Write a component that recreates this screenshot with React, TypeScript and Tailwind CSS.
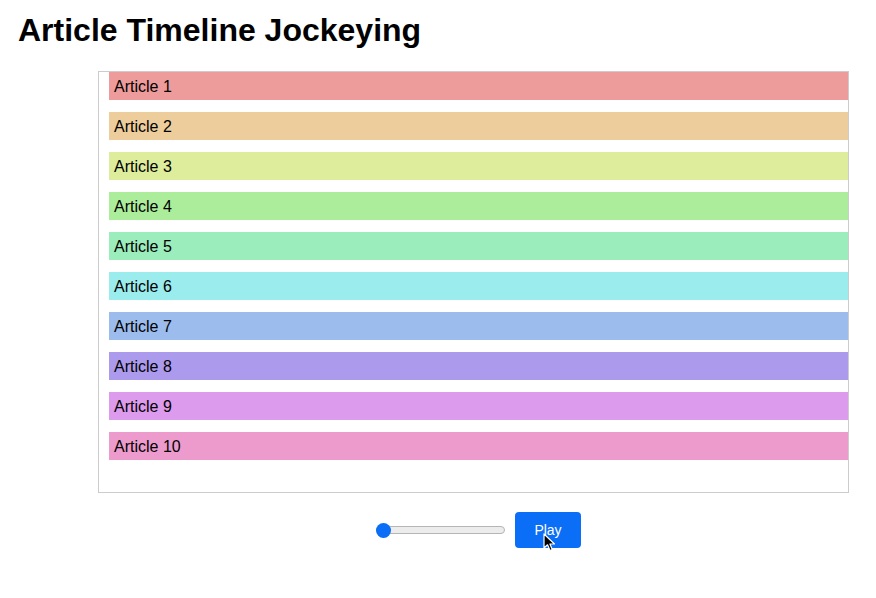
const ARTICLES = [
  { name: "Article 1", color: "bg-[#ED9B9B]" },
  { name: "Article 2", color: "bg-[#EDCD9B]" },
  { name: "Article 3", color: "bg-[#DDED9B]" },
  { name: "Article 4", color: "bg-[#ACED9B]" },
  { name: "Article 5", color: "bg-[#9BEDBC]" },
  { name: "Article 6", color: "bg-[#9BEDED]" },
  { name: "Article 7", color: "bg-[#9BBCED]" },
  { name: "Article 8", color: "bg-[#AC9BED]" },
  { name: "Article 9", color: "bg-[#DD9BED]" },
  { name: "Article 10", color: "bg-[#ED9BCD]" },
];

function Cursor() {
  return (
    <svg className="absolute left-[28px] top-[21px] w-[14px] h-[20px]" viewBox="0 0 14 20">
      <path d="M1 1 L1 15 L4.5 11.8 L7 17.5 L9.3 16.5 L6.9 11 L11.5 11 Z" fill="#000" stroke="#fff" strokeWidth="1.2" strokeLinejoin="round" />
    </svg>
  );
}

export default function App() {
  return (
    <div className="min-h-[598px] bg-white text-black font-['Liberation_Sans',Arial,sans-serif]">
      <h1 className="ml-[18px] pt-[12px] text-[32px] leading-[37px] font-bold">Article Timeline Jockeying</h1>

      {/* Timeline */}
      <div className="mt-[22px] ml-[98px] w-[751px] h-[422px] border border-[#cccccc] pl-[10px] flex flex-col gap-[12px]">
        {ARTICLES.map((a) => (
          <div key={a.name} className={"h-[28px] flex items-center pl-[5px] pt-[1px] text-[16px] " + a.color}>
            {a.name}
          </div>
        ))}
      </div>

      {/* Controls */}
      <div className="mt-[19px] ml-[376px] flex items-center gap-[10px]">
        <div className="relative w-[129px] h-[16px] flex items-center">
          <div className="w-full h-[8px] rounded-full bg-[#ececec] border border-[#b5b5b5]" />
          <div className="absolute left-0 top-[0.5px] w-[15px] h-[15px] rounded-full bg-[#0a6ef6]" />
        </div>
        <div className="relative">
          <button className="w-[66px] h-[36px] rounded-[4px] bg-[#0a6ef6] text-white text-[14px]">Play</button>
          <Cursor />
        </div>
      </div>
    </div>
  );
}
